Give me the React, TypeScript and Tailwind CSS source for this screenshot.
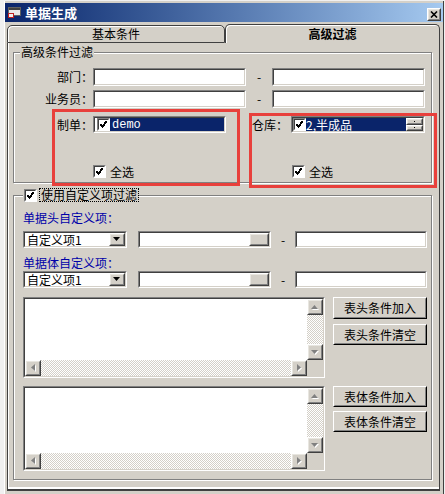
import React from "react";

// classic 3D bevels
const sunkenOuter = "border border-t-[#808080] border-l-[#808080] border-r-white border-b-white";
const sunkenInner = "border border-t-[#404040] border-l-[#404040] border-r-[#d4d0c8] border-b-[#d4d0c8]";
const raisedOuter = "border border-t-white border-l-white border-r-[#404040] border-b-[#404040]";
const raisedInner = "border border-t-[#e8e6e0] border-l-[#e8e6e0] border-r-[#808080] border-b-[#808080]";
const track = "bg-[repeating-conic-gradient(#ffffff_0_25%,#d4d0c8_0_50%)] bg-[length:2px_2px]";

type BoxProps = { className?: string; innerClassName?: string; children?: React.ReactNode };

function Sunken({ className = "", innerClassName = "", children }: BoxProps) {
  return (
    <div className={`${sunkenOuter} ${className}`}>
      <div className={`h-full w-full ${sunkenInner} ${innerClassName}`}>{children}</div>
    </div>
  );
}

function Raised({ className = "", innerClassName = "", children }: BoxProps) {
  return (
    <div className={`bg-[#d4d0c8] ${raisedOuter} ${className}`}>
      <div className={`h-full w-full ${raisedInner} ${innerClassName}`}>{children}</div>
    </div>
  );
}

function CheckBox() {
  return (
    <span className={`flex h-[13px] w-[13px] shrink-0 items-center justify-center bg-white ${sunkenOuter}`}>
      <span className={`flex h-full w-full items-center justify-center ${sunkenInner} border-r-white border-b-white`}>
        <svg width="7" height="7" viewBox="0 0 7 7" shapeRendering="crispEdges">
          <path d="M0.5 3 L2.5 5.5 L6.5 0.5" stroke="#000" strokeWidth="2" fill="none" />
        </svg>
      </span>
    </span>
  );
}

type Dir = "up" | "down" | "left" | "right";

const triangles: Record<Dir, { w: number; h: number; pts: string }> = {
  up: { w: 7, h: 4, pts: "3.5,0 7,4 0,4" },
  down: { w: 7, h: 4, pts: "0,0 7,0 3.5,4" },
  left: { w: 4, h: 7, pts: "4,0 4,7 0,3.5" },
  right: { w: 4, h: 7, pts: "0,0 4,3.5 0,7" },
};

function Arrow({ dir, disabled = false }: { dir: Dir; disabled?: boolean }) {
  const t = triangles[dir];
  return (
    <svg width={t.w + 1} height={t.h + 1} viewBox={`0 0 ${t.w + 1} ${t.h + 1}`}>
      {disabled && <polygon points={t.pts} fill="#fff" transform="translate(1 1)" />}
      <polygon points={t.pts} fill={disabled ? "#808080" : "#000"} />
    </svg>
  );
}

function ScrollBtn({ dir }: { dir: Dir }) {
  return (
    <Raised className="h-[16px] w-[16px] shrink-0" innerClassName="flex items-center justify-center">
      <Arrow dir={dir} disabled />
    </Raised>
  );
}

function ListBox({ className }: { className: string }) {
  return (
    <Sunken
      className={`w-[302px] ${className}`}
      innerClassName="grid grid-cols-[1fr_16px] grid-rows-[1fr_16px] bg-white"
    >
      <div />
      <div className="flex flex-col">
        <ScrollBtn dir="up" />
        <div className={`flex-1 ${track}`} />
        <ScrollBtn dir="down" />
      </div>
      <div className="flex">
        <ScrollBtn dir="left" />
        <div className={`flex-1 ${track}`} />
        <ScrollBtn dir="right" />
      </div>
      <div className="bg-[#d4d0c8]" />
    </Sunken>
  );
}

function Button({ label, className }: { label: string; className: string }) {
  return (
    <div className={`bg-[#d4d0c8] border border-t-white border-l-white border-r-black border-b-black ${className}`}>
      <div className="flex h-full w-full items-center justify-center border border-t-[#d4d0c8] border-l-[#d4d0c8] border-r-[#808080] border-b-[#808080]">
        {label}
      </div>
    </div>
  );
}

function Combo() {
  return (
    <Sunken className="h-[17px] w-[104px] shrink-0" innerClassName="flex items-center bg-white">
      <span className="flex-1 pl-[2px] leading-[13px]">自定义项1</span>
      <Raised className="h-full w-[16px]" innerClassName="flex items-center justify-center">
        <Arrow dir="down" />
      </Raised>
    </Sunken>
  );
}

function RefField({ className }: { className: string }) {
  return (
    <Sunken className={`h-[17px] shrink-0 ${className}`} innerClassName="flex bg-white">
      <div className="flex-1" />
      <Raised className="h-full w-[20px]" />
    </Sunken>
  );
}

function CustomRow() {
  return (
    <div className="flex h-[17px] items-center">
      <Combo />
      <RefField className="ml-[11px] w-[133px]" />
      <span className="w-[24px] text-center">-</span>
      <Sunken className="h-[17px] w-[132px]" innerClassName="bg-white" />
    </div>
  );
}

function RangeRow({ label, className = "" }: { label: string; className?: string }) {
  return (
    <div className={`flex h-[18px] items-center ${className}`}>
      <span className="w-[73px] text-right">{label}</span>
      <Sunken className="h-[18px] w-[153px]" innerClassName="bg-white" />
      <span className="w-[26px] text-center">-</span>
      <Sunken className="h-[18px] w-[153px]" innerClassName="bg-white" />
    </div>
  );
}

export default function App() {
  return (
    <div className="relative h-[494px] w-[445px] overflow-hidden bg-[#f0f0f0] font-['SimSun','Noto_Sans_CJK_SC',sans-serif] text-[12px] leading-[14px] text-black">
      <div className="ml-[4px] mt-[1px] h-[493px] w-[440px] border-l border-r border-l-white border-r-[#404040] bg-[#d4d0c8] pt-[2px]">
        {/* title bar */}
        <div className="flex h-[19px] items-center bg-linear-to-r from-[#0a246a] to-[#a6caf0] pl-[3px] pr-[2px]">
          <svg width="13" height="11" viewBox="0 0 13 11">
            <rect x="0.5" y="0.5" width="12" height="8" fill="#e8e8e8" stroke="#606060" />
            <rect x="1" y="1" width="11" height="2" fill="#404040" />
            <rect x="0" y="6" width="6" height="5" fill="#c02020" />
            <rect x="1" y="7" width="4" height="3" fill="#f0f0f0" />
          </svg>
          <span className="ml-[4px] flex-1 text-[13px] font-bold text-white">单据生成</span>
          <Raised className="mt-[3px] h-[13px] w-[14px]" innerClassName="flex items-center justify-center">
            <svg width="8" height="7" viewBox="0 0 8 7">
              <path d="M1 0.5 L7 6.5 M7 0.5 L1 6.5" stroke="#000" strokeWidth="1.6" />
            </svg>
          </Raised>
        </div>

        {/* tabs */}
        <div className="ml-[2px] mt-[2px] flex h-[19px] items-end">
          <div className="flex h-[18px] w-[218px] items-center justify-center rounded-t-[5px] border border-[#404040] shadow-[inset_1px_1px_0_#fff]">
            基本条件
          </div>
          <div className="flex h-[19px] w-[215px] items-center justify-center rounded-t-[5px] border border-b-0 border-[#404040] font-bold shadow-[inset_1px_1px_0_#fff]">
            高级过滤
          </div>
        </div>

        {/* tab page */}
        <div className="ml-[2px] h-[448px] w-[433px] border-x border-b-2 border-[#404040] pl-[5px] pt-[2px] shadow-[inset_1px_0_0_#fff,inset_0_-2px_0_#fff]">
          <fieldset className="w-[419px] border border-[#808080] pb-[4px] pl-[6px] pt-[9px] shadow-[inset_1px_1px_0_#fff,1px_1px_0_#fff]">
            <legend className="bg-[#d4d0c8] px-px leading-[14px]">高级条件过滤</legend>
            <RangeRow label="部门：" />
            <RangeRow label="业务员：" className="mt-[4px]" />

            <div className="mt-[8px] flex h-[17px] items-center">
              <span className="w-[73px] text-right">制单：</span>
              <Sunken className="h-[17px] w-[133px]" innerClassName="flex items-center bg-white">
                <span className="ml-[2px]">
                  <CheckBox />
                </span>
                <span className="flex h-full flex-1 items-center bg-[#0a246a] pl-[2px] font-['Liberation_Mono',monospace] text-white">
                  demo
                </span>
              </Sunken>
              <span className="ml-[26px] w-[39px]">仓库：</span>
              <Sunken className="h-[17px] w-[134px]" innerClassName="flex items-center bg-white">
                <CheckBox />
                <span className="flex h-full flex-1 items-center bg-[#0a246a] text-white">2,半成品</span>
                <div className="flex h-full w-[17px] flex-col bg-[#0a246a]">
                  <Raised className="h-1/2 w-full" innerClassName="flex items-center justify-center">
                    <span className="h-px w-px bg-black" />
                  </Raised>
                  <Raised className="h-1/2 w-full" innerClassName="flex items-center justify-center">
                    <span className="h-px w-px bg-black" />
                  </Raised>
                </div>
              </Sunken>
            </div>

            <div className="mt-[32px] flex h-[13px] items-center">
              <div className="ml-[73px] flex w-[199px] items-center gap-[4px]">
                <CheckBox />
                <span>全选</span>
              </div>
              <div className="flex items-center gap-[4px]">
                <CheckBox />
                <span>全选</span>
              </div>
            </div>
          </fieldset>

          <fieldset className="mt-[5px] w-[419px] border border-[#808080] pb-[8px] pl-[9px] pt-[8px] shadow-[inset_1px_1px_0_#fff,1px_1px_0_#fff]">
            <legend className="flex items-center bg-[#d4d0c8] pl-px">
              <CheckBox />
              <span className="ml-[2px] border border-dotted border-black px-px leading-[12px]">使用自定义项过滤</span>
            </legend>

            <div className="h-[16px] leading-[16px] text-[#0000a8]">单据头自定义项：</div>
            <div className="mt-[5px]">
              <CustomRow />
            </div>
            <div className="mt-[7px] h-[16px] leading-[16px] text-[#0000a8]">单据体自定义项：</div>
            <CustomRow />

            <div className="mt-[9px] flex items-start">
              <ListBox className="h-[81px]" />
              <div className="ml-[8px] flex w-[94px] flex-col gap-[5px]">
                <Button label="表头条件加入" className="h-[22px]" />
                <Button label="表头条件清空" className="h-[21px]" />
              </div>
            </div>

            <div className="mt-[8px] flex items-start">
              <ListBox className="h-[85px]" />
              <div className="ml-[8px] flex w-[94px] flex-col gap-[4px]">
                <Button label="表体条件加入" className="h-[21px]" />
                <Button label="表体条件清空" className="h-[21px]" />
              </div>
            </div>
          </fieldset>
        </div>
      </div>

      {/* red highlight frames */}
      <div className="absolute left-[52px] top-[109px] h-[77px] w-[188px] border-[3px] border-[#e8403c]" />
      <div className="absolute left-[249px] top-[113px] h-[75px] w-[188px] border-[3px] border-[#e8403c]" />
    </div>
  );
}
